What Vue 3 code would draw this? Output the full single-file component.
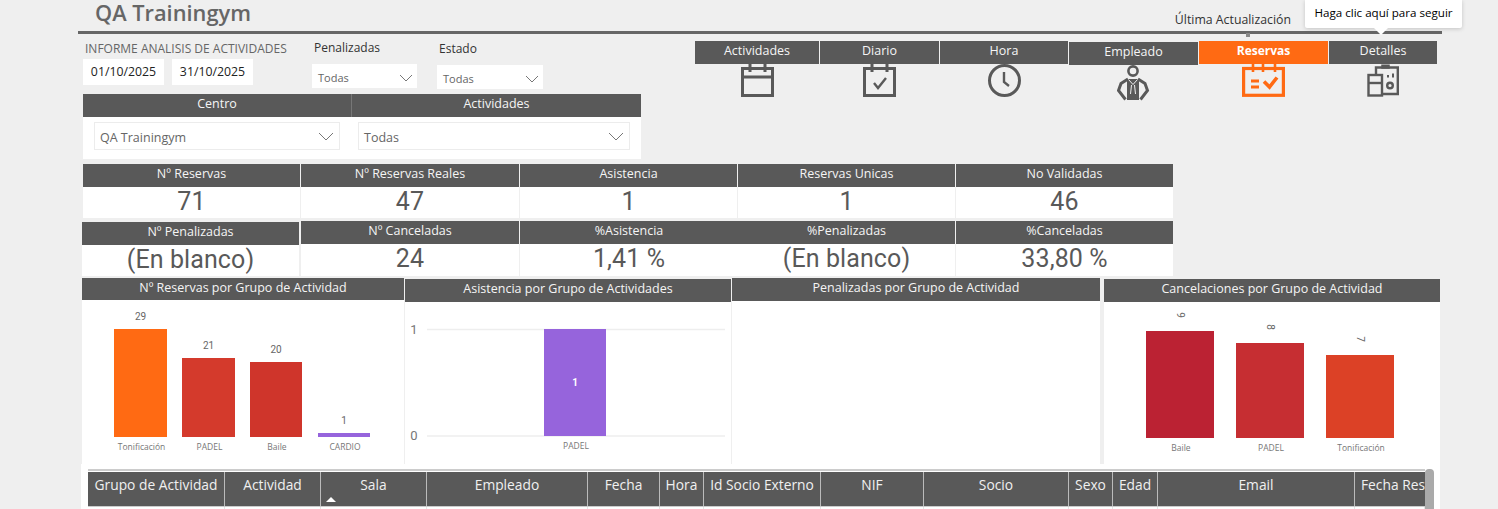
<template>
  <div class="page">
    <div class="top">
      <h1 class="title">QA Trainingym</h1>
      <span class="updated">Última Actualización</span>
    </div>
    <div class="rule"></div>

    <div class="tooltip">Haga clic aquí para seguir</div>
    <div class="rule-mark"></div>

    <div class="controls">
      <div class="left">
        <div class="slicers">
          <div class="dates">
            <div class="report-name">INFORME ANALISIS DE ACTIVIDADES</div>
            <div class="date-row">
              <span class="date-box">01/10/2025</span>
              <span class="date-box">31/10/2025</span>
            </div>
          </div>
          <div class="slicer slicer-pen">
            <div class="slicer-label">Penalizadas</div>
            <div class="mini-select">
              <span>Todas</span>
              <svg width="14" height="8" viewBox="0 0 14 8"><path d="M1 1l6 6 6-6" fill="none" stroke="#777" /></svg>
            </div>
          </div>
          <div class="slicer slicer-est">
            <div class="slicer-label">Estado</div>
            <div class="mini-select">
              <span>Todas</span>
              <svg width="14" height="8" viewBox="0 0 14 8"><path d="M1 1l6 6 6-6" fill="none" stroke="#777" /></svg>
            </div>
          </div>
        </div>

        <div class="filter-card">
          <div class="filter-heads">
            <div class="head filter-head-a">Centro</div>
            <div class="head filter-head-b">Actividades</div>
          </div>
          <div class="filter-body">
            <div class="select select-a">
              <span class="select-text">QA Trainingym</span>
              <svg width="16" height="9" viewBox="0 0 16 9"><path d="M1 1l7 7 7-7" fill="none" stroke="#777" /></svg>
            </div>
            <div class="select select-b">
              <span class="select-text">Todas</span>
              <svg width="16" height="9" viewBox="0 0 16 9"><path d="M1 1l7 7 7-7" fill="none" stroke="#777" /></svg>
            </div>
          </div>
        </div>
      </div>

      <nav class="nav">
        <div class="nav-item nav-actividades">
          <div class="head">Actividades</div>
          <svg class="nav-icon" width="33" height="33" viewBox="0 0 33 33" fill="none" stroke="#595959" stroke-width="3">
            <rect x="1.5" y="4.5" width="30" height="27" />
            <path d="M1.5 13h30M9 0v8M24 0v8" />
          </svg>
        </div>
        <div class="nav-item nav-diario">
          <div class="head">Diario</div>
          <svg class="nav-icon" width="33" height="33" viewBox="0 0 33 33" fill="none" stroke="#595959" stroke-width="3">
            <rect x="1.5" y="4.5" width="30" height="27" />
            <path d="M9 0v8M24 0v8" />
            <path d="M11 19l4 5 8-10" stroke-width="2.4" />
          </svg>
        </div>
        <div class="nav-item nav-hora">
          <div class="head">Hora</div>
          <svg class="nav-icon" width="33" height="33" viewBox="0 0 33 33" fill="none" stroke="#595959" stroke-width="3">
            <circle cx="16.5" cy="16.5" r="15" />
            <path d="M16 8v10l5 4" stroke-width="2.4" />
          </svg>
        </div>
        <div class="nav-item nav-empleado">
          <div class="head">Empleado</div>
          <svg class="nav-icon" width="33" height="36" viewBox="0 0 33 36">
            <circle cx="16" cy="6" r="4.6" fill="none" stroke="#595959" stroke-width="2.6" />
            <path d="M11 14L4 18.500 1.500 25.500 8.500 34.500M21 14l7 4.500 2.500 7-7 9" fill="none" stroke="#595959" stroke-width="3" />
            <path d="M10 14l12 0v21H10z" fill="#595959" />
            <path d="M11.500 14.500l4.500 5 4.500-5M14.500 20l-1 9M17.500 20l1 9" fill="none" stroke="#efefef" stroke-width="1" />
          </svg>
        </div>
        <div class="nav-item nav-reservas">
          <div class="head head-active">Reservas</div>
          <svg class="nav-icon" width="43" height="33" viewBox="0 0 43 33" fill="none" stroke="#ff6a13" stroke-width="3.2">
            <rect x="1.600" y="4.500" width="39.800" height="26.800" />
            <path d="M11 0v8M21 0v8M33 0v8" stroke-width="2.600" />
            <path d="M9 17h8M9 23h8" />
            <path d="M22 17.500l5.500 5.500L35 13.500" stroke-width="3.600" />
          </svg>
        </div>
        <div class="nav-item nav-detalles">
          <div class="head">Detalles</div>
          <svg class="nav-icon" width="32" height="33" viewBox="0 0 32 33" fill="none" stroke="#595959" stroke-width="2.400">
            <path d="M9 10V3.500h21.800V30H16" />
            <rect x="1.500" y="11" width="13.500" height="20.500" />
            <path d="M1.500 19h13.500" />
            <path d="M15 4h7V1.200h-7z" fill="#595959" stroke-width="1.500" />
            <circle cx="23" cy="21.500" r="2.800" />
            <path d="M21 11v2.500M26 9.500v4" stroke-width="2" />
          </svg>
        </div>
      </nav>
    </div>

    <section class="kpis">
      <div class="kpi-row kpi-row-top">
        <div v-for="k in kpisTop" :key="k.label" class="kpi">
          <div class="head">{{ k.label }}</div>
          <div class="kpi-value">{{ k.value }}</div>
        </div>
      </div>
      <div class="kpi-row kpi-row-bottom">
        <div v-for="k in kpisBottom" :key="k.label" :class="['kpi', k.cls]">
          <div class="head">{{ k.label }}</div>
          <div class="kpi-value">{{ k.value }}</div>
        </div>
      </div>
    </section>

    <section class="charts">
      <div v-for="c in charts" :key="c.title" :class="['chart', c.cls]">
        <div class="head">{{ c.title }}</div>
        <div class="chart-body">
          <svg v-if="c.viewBox" :viewBox="c.viewBox" class="chart-svg">
            <template v-if="c.axis">
              <line x1="427" x2="725" y1="329.500" y2="329.500" stroke="#eee" stroke-width="1.500" />
              <line x1="427" x2="725" y1="436" y2="436" stroke="#eee" stroke-width="1.500" />
              <text x="414" y="334" class="axis-text">1</text>
              <text x="414" y="440" class="axis-text">0</text>
            </template>
            <g v-for="b in c.bars" :key="b.name">
              <rect :x="b.x" :y="b.top" :width="b.w" :height="c.base - b.top" :fill="b.color" />
              <text
                v-if="c.rotated"
                :x="b.x + b.w / 2 - 3"
                :y="b.top - 16"
                class="bar-value"
                :transform="`rotate(90 ${b.x + b.w / 2 - 3} ${b.top - 16})`"
              >{{ b.value }}</text>
              <text
                v-else-if="c.inside"
                :x="b.x + b.w / 2"
                :y="(b.top + c.base) / 2 + 3"
                class="bar-value bar-value-in"
              >{{ b.value }}</text>
              <text v-else :x="b.x + b.w / 2" :y="b.top - 9" class="bar-value">{{ b.value }}</text>
              <text :x="b.x + b.w / 2 + 1" :y="c.base + 13" class="bar-name">{{ b.name }}</text>
            </g>
          </svg>
        </div>
      </div>
    </section>

    <section class="table-wrap">
      <div class="table">
        <div class="t-head">
          <div
            v-for="col in columns"
            :key="col.name"
            class="t-cell"
            :style="{ width: col.w + 'px' }"
          >
            <span class="t-name">{{ col.name }}</span>
            <span v-if="col.sorted" class="sort-arrow"></span>
          </div>
        </div>
        <div class="t-row">
          <div
            v-for="col in columns"
            :key="col.name"
            class="t-blank"
            :style="{ width: col.w + 'px' }"
          ></div>
        </div>
      </div>
      <div class="scrollbar"></div>
    </section>
  </div>
</template>

<script setup>
const kpisTop = [
  { label: 'Nº Reservas', value: '71' },
  { label: 'Nº Reservas Reales', value: '47' },
  { label: 'Asistencia', value: '1' },
  { label: 'Reservas Unicas', value: '1' },
  { label: 'No Validadas', value: '46' }
]

const kpisBottom = [
  { label: 'Nº Penalizadas', value: '(En blanco)', cls: 'kpi-shifted' },
  { label: 'Nº Canceladas', value: '24' },
  { label: '%Asistencia', value: '1,41 %', cls: 'kpi-joined' },
  { label: '%Penalizadas', value: '(En blanco)' },
  { label: '%Canceladas', value: '33,80 %' }
]

const charts = [
  {
    title: 'Nº Reservas por Grupo de Actividad',
    cls: 'chart-a',
    viewBox: '82 300 322 164',
    base: 437,
    bars: [
      { name: 'Tonificación', value: 29, x: 114, w: 53, top: 329, color: '#ff6a13' },
      { name: 'PADEL', value: 21, x: 182, w: 53, top: 358, color: '#d43a2c' },
      { name: 'Baile', value: 20, x: 250, w: 52, top: 362, color: '#cf352b' },
      { name: 'CARDIO', value: 1, x: 318, w: 52, top: 433, color: '#9664dc' }
    ]
  },
  {
    title: 'Asistencia por Grupo de Actividades',
    cls: 'chart-b',
    viewBox: '405 302 326 162',
    base: 436,
    axis: true,
    inside: true,
    bars: [{ name: 'PADEL', value: 1, x: 544, w: 62, top: 329, color: '#9664dc' }]
  },
  { title: 'Penalizadas por Grupo de Actividad', cls: 'chart-c' },
  {
    title: 'Cancelaciones por Grupo de Actividad',
    cls: 'chart-d',
    viewBox: '1104 302 336 162',
    base: 438,
    rotated: true,
    bars: [
      { name: 'Baile', value: 9, x: 1146, w: 68, top: 331, color: '#bb2233' },
      { name: 'PADEL', value: 8, x: 1236, w: 68, top: 343, color: '#c62e32' },
      { name: 'Tonificación', value: 7, x: 1326, w: 68, top: 355, color: '#dc4126' }
    ]
  }
]

const columns = [
  { name: 'Grupo de Actividad', w: 137 },
  { name: 'Actividad', w: 96 },
  { name: 'Sala', w: 106, sorted: true },
  { name: 'Empleado', w: 161 },
  { name: 'Fecha', w: 72 },
  { name: 'Hora', w: 44 },
  { name: 'Id Socio Externo', w: 117 },
  { name: 'NIF', w: 103 },
  { name: 'Socio', w: 145 },
  { name: 'Sexo', w: 44 },
  { name: 'Edad', w: 45 },
  { name: 'Email', w: 197 },
  { name: 'Fecha Reserva', w: 70 }
]
</script>

<style>
html,
body {
  margin: 0;
  background: #efefef;
}
</style>

<style scoped>
.page {
  position: relative;
  width: 1498px;
  height: 509px;
  overflow: hidden;
  background: #efefef;
  font-family: "Open Sans", "Liberation Sans", sans-serif;
  color: #595959;
}

.top {
  display: flex;
  align-items: flex-start;
  height: 31px;
  padding-left: 95px;
}

.title {
  margin: 0;
  font-size: 21.800px;
  line-height: 26px;
  font-weight: 600;
  color: #666;
}

.updated {
  margin-left: auto;
  margin-right: 207px;
  margin-top: 11px;
  font-size: 12.300px;
  line-height: 17px;
  color: #333;
}

.rule {
  height: 3px;
  margin-left: 78px;
  width: 1364px;
  background: #666;
}

.rule-mark {
  position: absolute;
  left: 1246px;
  top: 33px;
  width: 4px;
  height: 4px;
  background: #888;
}

.tooltip {
  position: absolute;
  left: 1305px;
  top: 0;
  width: 157px;
  height: 28px;
  background: #fff;
  border-radius: 0 0 2px 2px;
  box-shadow: 0 1px 4px rgba(0, 0, 0, 0.18);
  font-size: 11.600px;
  line-height: 26px;
  text-align: center;
  color: #000;
  z-index: 2;
}

.tooltip::after {
  content: "";
  position: absolute;
  left: 69px;
  top: 28px;
  border-left: 7px solid transparent;
  border-right: 7px solid transparent;
  border-top: 7px solid #fff;
}

.controls {
  display: flex;
  height: 125px;
  padding-left: 83px;
}

.left {
  width: 612px;
  flex-shrink: 0;
}

.slicers {
  display: flex;
  height: 60px;
}

.dates {
  width: 229px;
  padding-top: 7px;
}

.report-name {
  padding-left: 2px;
  font-size: 12px;
  line-height: 16px;
  white-space: nowrap;
  color: #666;
}

.date-row {
  display: flex;
  gap: 8px;
  margin-top: 2px;
}

.date-box {
  width: 81px;
  height: 26px;
  background: #fff;
  font-size: 12.300px;
  line-height: 26px;
  text-align: center;
  color: #222;
}

.slicer-pen {
  width: 125px;
}

.slicer-est {
  width: 106px;
}

.slicer-label {
  padding: 5px 0 0 2px;
  font-size: 12px;
  line-height: 17px;
  color: #333;
}

.slicer-est .slicer-label {
  padding-top: 6px;
}

.slicer-pen .mini-select {
  width: 105px;
  margin-top: 8px;
}

.slicer-est .mini-select {
  margin-top: 8px;
}

.mini-select {
  display: flex;
  align-items: center;
  justify-content: space-between;
  box-sizing: border-box;
  height: 24px;
  padding: 3px 4px 0 6px;
  background: #fff;
  font-size: 11px;
  color: #666;
}

.filter-card {
  width: 558px;
  background: #fff;
  height: 65px;
}

.filter-heads {
  display: flex;
}

.filter-head-a {
  width: 268px;
  border-right: 1px solid #777;
}

.filter-head-b {
  flex: 1;
}

.filter-body {
  display: flex;
  padding: 5px 11px 0;
}

.select {
  display: flex;
  align-items: center;
  justify-content: space-between;
  box-sizing: border-box;
  height: 28px;
  padding: 0 5px;
  border: 1px solid #ececec;
  font-size: 12.500px;
  color: #666;
}

.select-text {
  padding-top: 3px;
}

.select-a {
  width: 246px;
  margin-right: 18px;
}

.select-b {
  width: 272px;
}

.head {
  height: 23px;
  background: #595959;
  color: #f5f5f5;
  font-size: 12.500px;
  line-height: 20px;
  text-align: center;
  white-space: nowrap;
  overflow: hidden;
}

.head-active {
  background: #ff6a13;
  color: #fff;
  font-weight: 700;
  font-size: 12px;
}

.nav {
  display: flex;
  padding-top: 7px;
  gap: 1px;
}

.nav-item {
  display: flex;
  flex-direction: column;
  align-items: center;
}

.nav-item .head {
  align-self: stretch;
}

.nav-actividades {
  width: 124px;
}

.nav-diario {
  width: 119px;
}

.nav-hora {
  width: 128px;
}

.nav-empleado {
  width: 129px;
  margin-top: 1px;
}

.nav-reservas {
  width: 129px;
}

.nav-detalles {
  width: 108px;
}

.kpis {
  padding-left: 83px;
  margin-top: 5px;
}

.kpi-row {
  display: grid;
  grid-template-columns: 217px 218px 217px 217px 217px;
  gap: 1px;
  width: 1090px;
}

.kpi-row-bottom {
  margin-top: 3px;
}

.kpi {
  background: #fff;
  height: 54px;
}

.kpi-row-bottom .kpi {
  height: 55px;
}

.kpi-shifted {
  margin: 1px 1px 0 -1px;
  height: 54px !important;
}

.kpi-joined {
  margin-right: -1px;
}

.kpi-value {
  font-family: Roboto, "Liberation Sans", sans-serif;
  font-size: 25px;
  line-height: 30px;
  letter-spacing: 0.1px;
  text-align: center;
  color: #595959;
}

.charts {
  display: flex;
  height: 186px;
  margin: 2px 0 0 82px;
}

.chart {
  display: flex;
  flex-direction: column;
  background: #fff;
}

.chart-a {
  width: 322px;
}

.chart-a .head {
  height: 22px;
}

.chart-b {
  width: 326px;
  margin: 1px 1px 0;
}

.chart-c {
  width: 368px;
}

.chart-d {
  width: 336px;
  margin: 1px 0 0 4px;
}

.chart-body {
  flex: 1;
  min-height: 0;
}

.chart-svg {
  display: block;
  width: 100%;
  height: 100%;
}

.axis-text {
  font-family: Roboto, sans-serif;
  font-size: 13px;
  fill: #777;
  text-anchor: middle;
}

.bar-value {
  font-family: Roboto, sans-serif;
  font-size: 10px;
  fill: #666;
  text-anchor: middle;
}

.bar-value-in {
  fill: #fff;
  font-weight: 700;
}

.bar-name {
  font-family: "Open Sans", sans-serif;
  font-size: 8.500px;
  fill: #777;
  text-anchor: middle;
}

.table-wrap {
  display: flex;
  width: 1359px;
  height: 45px;
  margin-left: 81px;
  padding: 5px 0 0 7px;
  box-sizing: border-box;
  background: #fff;
}

.table {
  width: 1337px;
  overflow: hidden;
  border-top: 2px solid #ccc;
  flex-shrink: 0;
}

.t-head {
  display: flex;
  height: 34px;
  border-top: 1px solid #fff;
  border-bottom: 1px solid #ccc;
}

.t-cell {
  position: relative;
  flex-shrink: 0;
  overflow: hidden;
  box-sizing: border-box;
  background: #595959;
  border-right: 1px solid #bbb;
  font-size: 13.800px;
  line-height: 26px;
  text-align: center;
  white-space: nowrap;
  color: #f0f0f0;
}

.t-cell:last-child {
  border-right: none;
  text-align: left;
  padding-left: 6px;
}

.sort-arrow {
  position: absolute;
  left: 5px;
  bottom: 4px;
  border-left: 5px solid transparent;
  border-right: 5px solid transparent;
  border-bottom: 5px solid #fff;
}

.t-row {
  display: flex;
  height: 4px;
}

.t-blank {
  flex-shrink: 0;
  box-sizing: border-box;
  border-right: 1px solid #e6e6e6;
}

.scrollbar {
  width: 9px;
  height: 45px;
  border-radius: 4px;
  background: #aaa;
}
</style>
